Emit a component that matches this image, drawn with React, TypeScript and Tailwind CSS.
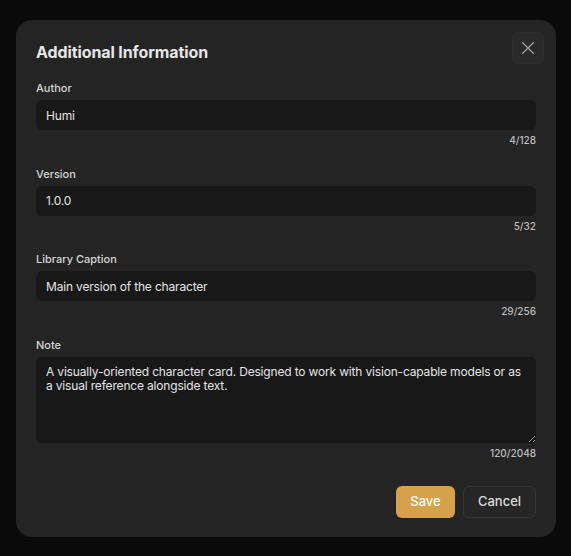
import { useState } from "react";

const FIELDS = [
  { label: "Author", value: "Humi", max: 128 },
  { label: "Version", value: "1.0.0", max: 32 },
  { label: "Library Caption", value: "Main version of the character", max: 256 },
] as const;

const NOTE =
  "A visually-oriented character card. Designed to work with vision-capable models or as a visual reference alongside text.";

export default function App() {
  const [values, setValues] = useState<string[]>(FIELDS.map((f) => f.value));
  const [note, setNote] = useState(NOTE);

  return (
    <div className="min-h-[556px] bg-[#0a0a0a] pl-[16px] pt-[20px] font-['Inter',sans-serif]">
      <div className="relative flex w-[540px] flex-col rounded-[16px] bg-[#242424] px-[20px] pb-[19px] pt-[20px]">
        <h2 className="text-[16px] font-bold leading-[24px] tracking-[-0.1px] text-[#e6e6e6]">Additional Information</h2>
        <button className="absolute right-[12px] top-[12px] flex h-[32px] w-[32px] items-center justify-center rounded-[6px] border border-[#2f2f2f] bg-[#2a2a2a] text-[#a0a0a0]">
          <svg width="14" height="14" viewBox="0 0 14 14" fill="none" stroke="currentColor" strokeWidth="1.2" strokeLinecap="round">
            <path d="M1.5 1.5l11 11M12.5 1.5l-11 11" />
          </svg>
        </button>

        <div className="mt-[16px] flex flex-col gap-[17.5px]">
          {FIELDS.map((f, i) => (
            <div key={f.label} className="flex flex-col">
              <label className="text-[11px] font-medium leading-[16px] text-[#d6d6d6]">{f.label}</label>
              <input
                value={values[i]}
                maxLength={f.max}
                onChange={(e) => setValues(values.map((v, j) => (j === i ? e.target.value : v)))}
                className="mt-[4px] h-[30px] rounded-[6px] bg-[#181818] px-[10px] text-[12px] tracking-[-0.17px] text-[#e4e4e4] outline-none"
              />
              <div className="mt-[3px] text-right text-[10px] font-medium leading-[15px] text-[#bdbdbd]">
                {values[i].length}/{f.max}
              </div>
            </div>
          ))}
          <div className="flex flex-col">
            <label className="text-[11px] font-medium leading-[16px] text-[#d6d6d6]">Note</label>
            <textarea
              value={note}
              maxLength={2048}
              onChange={(e) => setNote(e.target.value)}
              className="mt-[4px] h-[86px] rounded-[6px] bg-[#181818] py-[8px] pl-[10px] pr-[8px] text-[12px] leading-[14px] tracking-[-0.17px] text-[#e4e4e4] outline-none"
            />
            <div className="mt-[3px] text-right text-[10px] font-medium leading-[15px] text-[#bdbdbd]">
              {note.length}/2048
            </div>
          </div>
        </div>

        <div className="mt-[25px] flex justify-end gap-[8px]">
          <button className="h-[32px] w-[59px] rounded-[6px] bg-[#d6a14a] text-[13px] font-medium text-white">Save</button>
          <button className="h-[32px] w-[73px] rounded-[6px] border border-[#353535] bg-[#262626] text-[13px] font-medium text-[#dcdcdc]">
            Cancel
          </button>
        </div>
      </div>
    </div>
  );
}
